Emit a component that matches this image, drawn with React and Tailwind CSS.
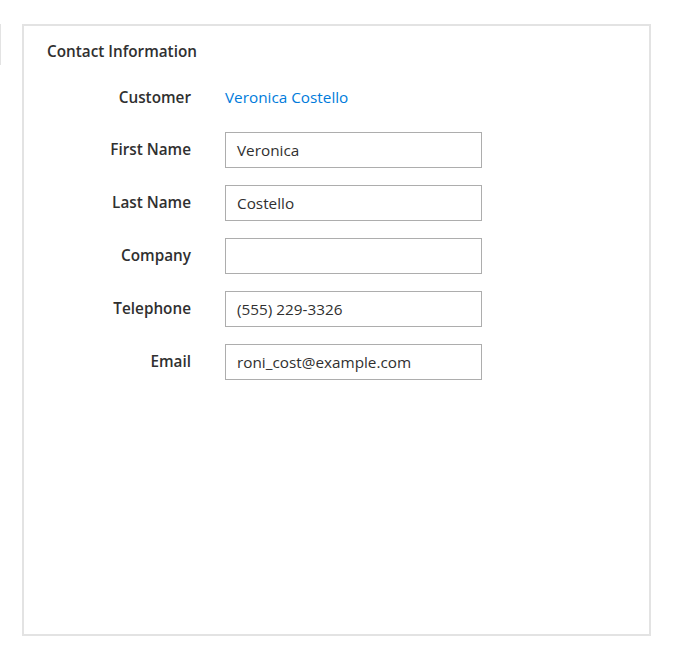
import React from "react";

const rows = [
  { label: "First Name", value: "Veronica" },
  { label: "Last Name", value: "Costello" },
  { label: "Company", value: "" },
  { label: "Telephone", value: "(555) 229-3326" },
  { label: "Email", value: "roni_cost@example.com" },
];

export default function App() {
  return (
    <div
      className="relative w-[676px] h-[658px] bg-white text-[#303030]"
      style={{ fontFamily: '"Open Sans", "Liberation Sans", sans-serif' }}
    >
      <div className="absolute left-0 top-[24px] h-[41px] w-px bg-[#e3e3e3]" />
      <div className="pt-[24px] pl-[22px]">
        <div className="w-[629px] h-[612px] border-2 border-[#e3e3e3] pt-[13px]">
          <div className="pl-[23px] text-[15.3px] leading-[24px] font-semibold">
            Contact Information
          </div>
          <div className="mt-[16px] flex flex-col gap-[17px]">
            <div className="flex items-center h-[36px]">
              <div className="w-[167px] text-right text-[15.3px] font-semibold">Customer</div>
              <div className="ml-[34px] text-[15.3px] text-[#007bdb]">Veronica Costello</div>
            </div>
            {rows.map((r) => (
              <div key={r.label} className="flex items-center h-[36px]">
                <div className="w-[167px] pb-[2px] text-right text-[15.3px] font-semibold">{r.label}</div>
                <div className="ml-[34px] w-[257px] h-[36px] border border-[#adadad] flex items-center px-[11px] text-[15.3px] text-[#303030]">
                  {r.value}
                </div>
              </div>
            ))}
          </div>
        </div>
      </div>
    </div>
  );
}
